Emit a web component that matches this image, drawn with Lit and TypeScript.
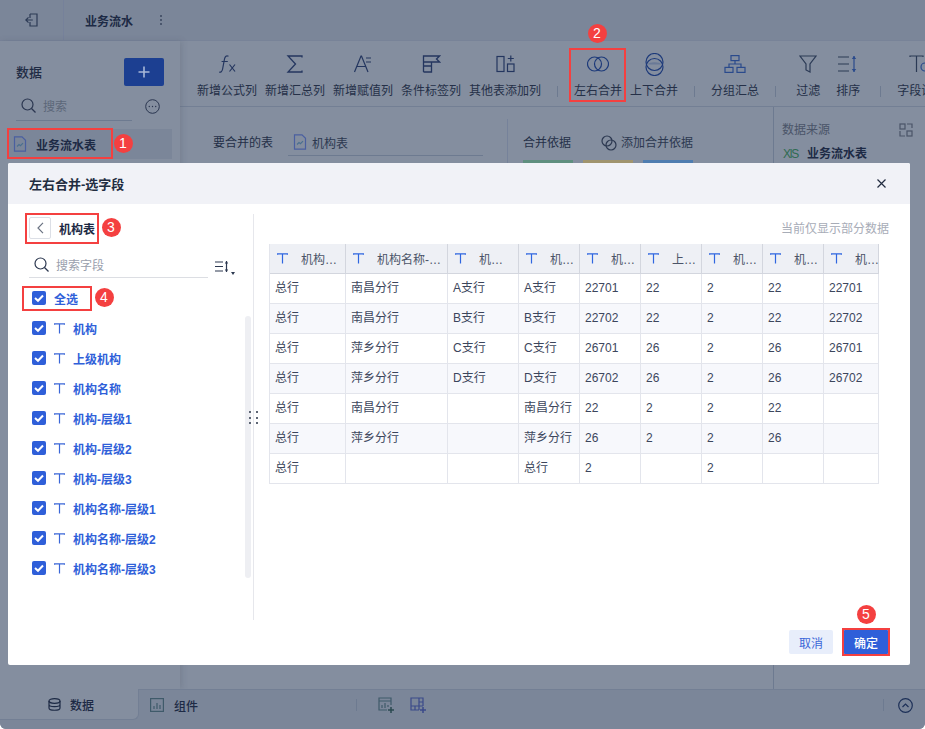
import { LitElement, html, css, svg } from "lit";
import { customElement } from "lit/decorators.js";

const ic = (w: number, h: number, body: unknown, cls = "") =>
  html`<svg class=${cls} width=${w} height=${h} viewBox="0 0 ${w} ${h}" fill="none" stroke="currentColor" stroke-width="1.2">${body}</svg>`;

const fileIcon = ic(14, 16, svg`<path d="M1.5.8h7.5l3.5 3.500v10.900h-11z" stroke="#4a5fa0"/><path d="M4 10.500l2-2 1.500 1.200 2.500-2.500" stroke="#4a6f90"/>`);

const ribbon: { label: string; icon: unknown; cls?: string }[] = [
  { label: "新增公式列", icon: ic(17, 18, svg`<path d="M9.500 1.300C7.500.2 6 1.200 5.500 4L3.600 14c-.5 2.700-2 3.700-3.400 2.900M2.600 6.500h6.200M10.500 9.500l5.500 7M16 9.500l-5.500 7"/>`) },
  { label: "新增汇总列", icon: ic(20, 20, svg`<path d="M17 3.500V2H3l7.500 8L3 18h14v-1.500" stroke-width="1.300"/>`) },
  { label: "新增赋值列", icon: ic(20, 20, svg`<path d="M1.500 18L8 2h.5l6.500 16M4 12.500h9M13 4h5M13 8h5" stroke-width="1.200"/>`) },
  { label: "条件标签列", icon: ic(20, 20, svg`<path d="M2.500 18V2h16l-3 3 3 3h-16M2.500 12h8V8M2.500 18h8v-6" stroke-width="1.300"/>`) },
  { label: "其他表添加列", icon: ic(20, 20, svg`<rect x="2" y="2.500" width="7" height="15"/><rect x="12.500" y="10" width="6.500" height="7.500"/><path d="M15.800 1.500v6M12.800 4.500h6"/>`) },
  { label: "左右合并", cls: "sep", icon: ic(22, 16, svg`<circle cx="7.500" cy="8" r="7" stroke="#1d3a7a"/><circle cx="14.500" cy="8" r="7" stroke="#1d3a7a"/>`) },
  { label: "上下合并", icon: ic(19, 23, svg`<circle cx="9.500" cy="9" r="8.500" stroke="#1d3a7a"/><circle cx="9.500" cy="14" r="8.500" stroke="#1d3a7a"/><path d="M2.500 11.500h14c-1.500-3-12.500-3-14 0z" fill="#4d648f" stroke="none" opacity=".5"/>`) },
  { label: "分组汇总", cls: "sep", icon: ic(22, 18, svg`<rect x="7" y=".6" width="8" height="5" stroke="#2a4a8c"/><rect x="1" y="12.400" width="8" height="5" stroke="#2a4a8c"/><rect x="13" y="12.400" width="8" height="5" stroke="#2a4a8c"/><path d="M5 12.400v-3.400h12v3.400M11 5.600V9" stroke="#2a4a8c"/>`) },
  { label: "过滤", cls: "sep short", icon: ic(18, 18, svg`<path d="M1 1h16l-6 8v8l-4-2v-6z" stroke="#2b3a55"/>`) },
  { label: "排序", cls: "short", icon: ic(20, 18, svg`<path d="M0 2h11M0 9h11M0 16h11" stroke="#2b3a55"/><path d="M16 1v16" stroke="#2a4a8c"/><path d="M13.800 4l2.200-3 2.200 3zM13.800 14l2.200 3 2.200-3z" fill="#2a4a8c" stroke="none"/>`) },
  { label: "字段设置", cls: "sep", icon: ic(24, 20, svg`<path d="M1 3V2h13v1M7.500 2v16" stroke="#2b3a55"/><circle cx="16" cy="13" r="4" stroke="#2a4a8c"/>`) },
];

const fields = ["机构", "上级机构", "机构名称", "机构-层级1", "机构-层级2", "机构-层级3", "机构名称-层级1", "机构名称-层级2", "机构名称-层级3"];
const cols = ["机构名称-层级1", "机构名称-层级2", "机构名称-层级3", "机构名称", "机构编码", "上级机构", "机构-层级1", "机构-层级2", "机构-层级3"];
const rows = [
  ["总行", "南昌分行", "A支行", "A支行", "22701", "22", "2", "22", "22701"],
  ["总行", "南昌分行", "B支行", "B支行", "22702", "22", "2", "22", "22702"],
  ["总行", "萍乡分行", "C支行", "C支行", "26701", "26", "2", "26", "26701"],
  ["总行", "萍乡分行", "D支行", "D支行", "26702", "26", "2", "26", "26702"],
  ["总行", "南昌分行", "", "南昌分行", "22", "2", "2", "22", ""],
  ["总行", "萍乡分行", "", "萍乡分行", "26", "2", "2", "26", ""],
  ["总行", "", "", "总行", "2", "", "2", "", ""],
];

const check = html`<span class="check"><svg width="14" height="14" viewBox="0 0 14 14" fill="none"><path d="M3 7l3 2.800L11 4.500" stroke="#fff" stroke-width="2"/></svg></span>`;
const tIcon = html`<svg class="t" width="11" height="11" viewBox="0 0 11 11" fill="none" stroke="currentColor" stroke-width="1.200"><path d="M.6 1.800V.8h9.800v1M5.500.8V10.500"/></svg>`;
const search = ic(15, 15, svg`<circle cx="6.500" cy="6.500" r="5.500"/><path d="M10.500 10.500l4 4"/>`);

@customElement("app-root")
export class AppRoot extends LitElement {
  static styles = css`
    :host {
      display: block;
      width: 925px;
      height: 729px;
      position: relative;
      overflow: hidden;
      font: 12px "Liberation Sans", "Noto Sans CJK SC", sans-serif;
      color: #253048;
    }
    * { box-sizing: border-box; }
    .shell {
      height: 729px;
      display: flex;
      flex-direction: column;
      background: #848e9f;
      border-radius: 0 0 6px 6px;
      overflow: hidden;
    }
    .top {
      height: 41px;
      flex: none;
      display: flex;
      align-items: center;
      background: #7b8699;
      border-bottom: 1px solid #788398;
    }
    .back { width: 64px; height: 100%; display: flex; align-items: center; justify-content: center; border-right: 1px solid #76819a; color: #2c3a55; }
    .title { margin-left: 21px; font-weight: 700; color: #1d2a45; }
    .dots { margin-left: 27px; display: flex; flex-direction: column; gap: 2px; }
    .dots i { width: 2px; height: 2px; background: #4a566d; }
    .middle { flex: 1; display: flex; min-height: 0; }
    .side { width: 180px; flex: none; padding: 16px 8px 0 8px; background: #848e9f; box-shadow: 2px 0 6px rgba(60,70,90,.18); position: relative; }
    .side-head { display: flex; justify-content: space-between; align-items: center; padding: 1px 8px 0 8px; height: 28px; font-size: 13px; font-weight: 500; color: #1f2b44; }
    .plus { width: 40px; height: 28px; border-radius: 2px; background: #1c3f91; color: #a8b8d8; display: flex; align-items: center; justify-content: center; }
    .side-search { display: flex; align-items: center; margin: 9px 8px 0 8px; }
    .side-input { width: 116px; height: 27px; border-bottom: 1px solid #6d7a90; display: flex; align-items: center; gap: 7px; padding: 0 0 4px 5px; color: #5c6779; }
    .side-input svg { color: #2a3650; flex: none; }
    .more { margin: -3px 0 0 13px; color: #2a3650; display: flex; }
    .side-item { margin-top: 8px; height: 30px; width: 164px; background: #7b8699; display: flex; align-items: center; gap: 9px; padding-left: 5px; font-weight: 700; color: #1d2a45; }
    .main { flex: 1; display: flex; flex-direction: column; min-width: 0; }
    .ribbon { height: 66px; flex: none; display: flex; padding-left: 17px; gap: 8px; border-bottom: 1px solid #737f94; overflow: hidden; }
    .rb { flex: none; display: flex; flex-direction: column; align-items: center; white-space: nowrap; color: #253048; }
    .rb .ico { height: 20px; margin-top: 13px; display: flex; align-items: center; justify-content: center; color: #24365f; }
    .rb span.lbl { margin-top: 8px; line-height: 18px; }
    .rb.short { padding: 0 4px; }
    .rb.sep { margin-left: 25px; position: relative; }
    .rb.sep::before { content: ""; position: absolute; left: -17px; top: 45px; height: 11px; width: 1px; background: #6d7a90; }
    .content { flex: 1; display: flex; min-height: 0; }
    .cfg { width: 593px; flex: none; display: flex; align-items: flex-start; }
    .cfg-left { width: 328px; height: 100px; padding: 15px 0 0 33px; display: flex; align-items: flex-start; border-right: 1px solid #76829a; margin-top: 12px; }
    .cfg-left .cap { width: 75px; line-height: 18px; }
    .cfg-input { width: 195px; height: 22px; border-bottom: 1px solid #6d7a90; display: flex; gap: 5px; padding-left: 5px; color: #2c3850; align-items: flex-start; }
    .cfg-right { flex: 1; padding: 27px 0 0 15px; }
    .cfg-row { display: flex; gap: 30px; line-height: 18px; align-items: center; }
    .add { display: flex; align-items: center; gap: 4px; color: #2c3850; }
    .bars { display: flex; gap: 10px; margin-top: 8px; }
    .bars i { width: 50px; height: 4px; }
    .src { flex: 1; border-left: 1px solid #6d7a90; padding: 14px 10px 0 8px; }
    .src-head { display: flex; justify-content: space-between; padding-right: 2px; color: #4a5468; line-height: 18px; align-items: center; }
    .src-name { display: flex; align-items: center; gap: 9px; font-weight: 700; color: #1d2a45; margin-top: 6px; line-height: 18px; padding-left: 1px; }
    .src-name em { color: #2f6b52; font-style: normal; font-weight: 400; font-size: 12px; letter-spacing: -1.200px; }
    .bottom { height: 40px; flex: none; display: flex; background: #7b8699; position: relative; border-top: 0; }
    .tab1 { width: 139px; height: 31px; background: #848e9f; border-radius: 0 0 6px 0; display: flex; align-items: center; gap: 9px; padding-left: 48px; font-weight: 500; color: #1d2a45; position: relative; z-index: 1; border-right: 1px solid #737f94; border-bottom: 1px solid #737f94; }
    .bottom-rest { flex: 1; border-top: 1px solid #737f94; display: flex; align-items: center; padding-left: 11px; height: 40px; margin-top: 0; padding-bottom: 9px; }
    .tab2 { display: flex; align-items: center; gap: 10px; font-weight: 500; color: #1d2a45; width: 206px; }
    .bsep { width: 1px; height: 12px; background: #6d7a90; }
    .bicons { display: flex; gap: 16px; margin-left: 21px; }
    .bright { margin-left: auto; display: flex; align-items: center; gap: 14px; padding-right: 12px; color: #1d3058; }
    /* modal */
    .modal { position: absolute; left: 8px; top: 163px; width: 902px; height: 502px; background: #fff; border-radius: 2px; display: flex; flex-direction: column; overflow: hidden; }
    .m-head { height: 41px; flex: none; background: #f1f2f7; display: flex; align-items: center; justify-content: space-between; padding: 0 24px 0 21px; font-size: 13px; font-weight: 700; color: #222c40; }
    .m-body { flex: 1; display: flex; min-height: 0; padding-top: 10px; }
    .m-left { width: 246px; flex: none; height: 406px; border-right: 1px solid #e6e7ec; position: relative; padding: 3px 0 0 21px; }
    .back-row { display: flex; align-items: center; gap: 8px; font-weight: 700; color: #1d2a45; }
    .back-btn { width: 22px; height: 22px; border: 1px solid #dcdfe6; border-radius: 2px; display: flex; align-items: center; justify-content: center; color: #6c7483; }
    .f-search { display: flex; align-items: flex-end; margin-top: 13px; }
    .f-input { width: 179px; height: 26px; border-bottom: 1px solid #dcdee3; display: flex; align-items: center; gap: 7px; padding: 0 0 0 5px; color: #9aa0ad; }
    .f-input svg { color: #2c3850; flex: none; }
    .sort { margin-left: 7px; margin-bottom: 5px; color: #2c3850; display: flex; align-items: flex-end; }
    .sort b { width: 0; height: 0; border: 2.500px solid transparent; border-top: 3px solid #2c3850; margin-bottom: -4px; margin-left: 1px; }
    .f-list { margin-top: 5px; padding-left: 3px; }
    .f-row { height: 30px; display: flex; align-items: center; font-weight: 700; color: #2f5fd9; white-space: nowrap; }
    .check { width: 14px; height: 14px; background: #2f5fd9; border-radius: 2px; display: flex; flex: none; margin-right: 8px; }
    .f-row .t { color: #3a66d8; margin-right: 8px; flex: none; }
    .scroll { position: absolute; left: 237px; top: 102px; width: 6px; height: 262px; background: #eeeff3; border-radius: 3px; }
    .handle { position: absolute; left: 241px; top: 197px; display: grid; grid-template-columns: 2px 2px; gap: 3.500px 5px; }
    .handle i { width: 2px; height: 2px; background: #5e6675; }
    .m-right { flex: 1; min-width: 0; padding: 0 31px 0 15px; display: flex; flex-direction: column; }
    .hint { text-align: right; color: #a7acb7; line-height: 18px; margin-top: 6px; margin-right: -10px; }
    .grid { margin-top: 6px; width: 610px; display: grid; grid-template-columns: 76px 102px 71px 61px 61px 61px 61px 61px 55px; border-left: 1px solid #e3e5ec; }
    .hc { height: 30px; background: #eef0f5; border-right: 1px solid #d3d6de; border-bottom: 1px solid #d3d6de; display: flex; align-items: center; padding: 0 6px 0 7px; gap: 13px; color: #4b5468; min-width: 0; }
    .grid .hc:nth-child(9) { padding-right: 0; }
    .hc .t { color: #2f66e0; flex: none; }
    .hc span { overflow: hidden; white-space: nowrap; text-overflow: ellipsis; min-width: 0; flex: 1; }
    .c { height: 30px; border-right: 1px solid #e3e5ec; border-bottom: 1px solid #e3e5ec; padding-left: 5px; line-height: 29px; color: #3c465c; white-space: nowrap; overflow: hidden; }
    .c.alt { background: #f7f8fc; }
    .foot { position: absolute; left: 789px; top: 630px; display: flex; gap: 10px; }
    .btn { width: 44px; height: 24px; border-radius: 2px; background: #e8eefb; color: #3a66d8; display: flex; align-items: center; justify-content: center; }
    .btn.ok { width: 46px; background: #2f5fd9; color: #fff; font-weight: 500; }
    /* annotations */
    .box { position: absolute; border: 2px solid #f44040; pointer-events: none; }
    .num { position: absolute; width: 19px; height: 19px; margin: -9.500px 0 0 -9.500px; border-radius: 50%; background: #f44040; color: #fff; display: flex; align-items: center; justify-content: center; font-size: 14px; line-height: 19px; }
  `;

  private box(x: number, y: number, w: number, h: number) {
    return html`<div class="box" style="left:${x}px;top:${y}px;width:${w}px;height:${h}px"></div>`;
  }
  private num(n: number, x: number, y: number) {
    return html`<div class="num" style="left:${x}px;top:${y}px">${n}</div>`;
  }

  render() {
    return html`
      <div class="shell">
        <div class="top">
          <div class="back">${ic(13, 14, svg`<path d="M5 1h7v12H5V9M5 5V1M0.800 7h7M3.500 4.300L.8 7l2.700 2.700"/>`)}</div>
          <div class="title">业务流水</div>
          <div class="dots"><i></i><i></i><i></i></div>
        </div>
        <div class="middle">
          <aside class="side">
            <div class="side-head"><span>数据</span>
              <div class="plus">${ic(12, 12, svg`<path d="M6 .5v11M.5 6h11" stroke-width="1.600"/>`)}</div></div>
            <div class="side-search">
              <div class="side-input">${search}<span>搜索</span></div>
              <span class="more">${ic(15, 15, svg`<circle cx="7.500" cy="7.500" r="6.800" stroke-width="1"/><circle cx="4.300" cy="7.500" r=".7" fill="currentColor" stroke="none"/><circle cx="7.500" cy="7.500" r=".7" fill="currentColor" stroke="none"/><circle cx="10.700" cy="7.500" r=".7" fill="currentColor" stroke="none"/>`)}</span>
            </div>
            <div class="side-item">${fileIcon}<span>业务流水表</span></div>
          </aside>
          <div class="main">
            <div class="ribbon">
              ${ribbon.map((r) => html`<div class="rb ${r.cls ?? ""}"><div class="ico">${r.icon}</div><span class="lbl">${r.label}</span></div>`)}
            </div>
            <div class="content">
              <div class="cfg">
                <div class="cfg-left"><span class="cap">要合并的表</span><div class="cfg-input">${fileIcon}<span>机构表</span></div></div>
                <div class="cfg-right">
                  <div class="cfg-row"><span>合并依据</span><span class="add">${ic(16, 16, svg`<circle cx="6" cy="6" r="5"/><circle cx="10" cy="10" r="5"/>`)}添加合并依据</span></div>
                  <div class="bars"><i style="background:#5f8f7f"></i><i style="background:#a0946e"></i><i style="background:#4f7db0"></i></div>
                </div>
              </div>
              <div class="src">
                <div class="src-head"><span>数据来源</span>${ic(14, 14, svg`<rect x="1" y="1" width="5" height="5"/><rect x="8" y="8" width="5" height="5"/><path d="M8 1h5v4M1 8v5h5"/>`)}</div>
                <div class="src-name"><em>XlS</em><span>业务流水表</span></div>
              </div>
            </div>
          </div>
        </div>
        <div class="bottom">
          <div class="tab1">${ic(13, 13, svg`<ellipse cx="6.500" cy="3" rx="5.500" ry="2.300"/><path d="M1 3v7c0 3 11 3 11 0V3M1 6.500c0 2.800 11 2.800 11 0"/>`)}<span>数据</span></div>
          <div class="bottom-rest">
            <div class="tab2">${ic(14, 14, svg`<rect x=".6" y=".6" width="12.800" height="12.800" stroke="#3f5a6a"/><path d="M4 11V8M7 11V5M10 11V7" stroke="#3f5a6a"/>`)}<span>组件</span></div>
            <i class="bsep"></i>
            <div class="bicons">
              ${ic(16, 16, svg`<path d="M13 8V1H1v12h8M1 4h12" stroke="#3f5a6a"/><path d="M4 11V8M7 11V6M10 10V8" stroke="#3f5a6a"/><path d="M13 10v6M10 13h6" stroke="#2b4a50" stroke-width="1.500"/>`)}
              ${ic(16, 16, svg`<path d="M13 9V1H1v12h8M1 9h12M5 9v4M9 1v12M9 5h4" stroke="#3b4a8a"/><path d="M13 10v6M10 13h6" stroke="#3b4a8a" stroke-width="1.500"/>`)}
            </div>
            <div class="bright"><i class="bsep"></i>${ic(15, 15, svg`<circle cx="7.500" cy="7.500" r="6.800"/><path d="M4.500 9l3-3 3 3"/>`)}</div>
          </div>
        </div>
      </div>

      <div class="modal">
        <div class="m-head"><span>左右合并-选字段</span>${ic(9, 9, svg`<path d="M.5.5l8 8M8.500.5l-8 8"/>`)}</div>
        <div class="m-body">
          <div class="m-left">
            <div class="back-row"><span class="back-btn">${ic(7, 12, svg`<path d="M6 .8L1 6l5 5.200"/>`)}</span><span>机构表</span></div>
            <div class="f-search">
              <div class="f-input">${search}<span>搜索字段</span></div>
              <span class="sort">${ic(15, 13, svg`<path d="M0 2h8M0 6.500h8M0 11h8"/><path d="M11.500 1v11"/><path d="M9.800 3.500l1.700-2.500 1.700 2.500zM9.800 9.500l1.700 2.500 1.700-2.500z" fill="currentColor" stroke="none"/>`)}<b></b></span>
            </div>
            <div class="f-list">
              <div class="f-row">${check}<span>全选</span></div>
              ${fields.map((f) => html`<div class="f-row">${check}${tIcon}<span>${f}</span></div>`)}
            </div>
            <div class="scroll"></div>
            <div class="handle"><i></i><i></i><i></i><i></i><i></i><i></i></div>
          </div>
          <div class="m-right">
            <div class="hint">当前仅显示部分数据</div>
            <div class="grid">
              ${cols.map((c) => html`<div class="hc">${tIcon}<span>${c}</span></div>`)}
              ${rows.map((r, i) => r.map((v) => html`<div class="c ${i % 2 ? "alt" : ""}">${v}</div>`))}
            </div>
          </div>
        </div>
      </div>
      <div class="foot"><div class="btn">取消</div><div class="btn ok">确定</div></div>

      ${this.box(7, 128, 106, 31)}
      ${this.box(569, 48, 57, 54)}
      ${this.box(25, 213, 74, 31)}
      ${this.box(22, 286, 70, 25)}
      ${this.box(842, 628, 48, 28)}
      ${this.num(1, 123, 143)}
      ${this.num(2, 597, 33)}
      ${this.num(3, 111, 227)}
      ${this.num(4, 104, 297)}
      ${this.num(5, 866, 614)}
    `;
  }
}
